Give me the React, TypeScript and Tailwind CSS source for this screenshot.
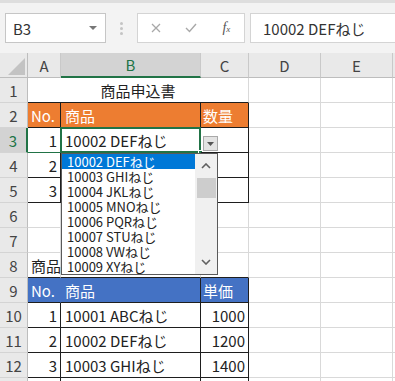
import type { ReactNode } from 'react';
import { twMerge } from 'tailwind-merge';

const GRID = 'border-r border-b border-r-[#d9d9d9] border-b-[#d9d9d9]';
const TBL = 'border-r-[#1e1e1e] border-b-[#1e1e1e]';
const ORANGE = 'bg-[#ed7d31] text-white';
const BLUE = 'bg-[#4472c4] text-white';

type CellSpec = { text?: ReactNode; cls?: string; span?: number; extra?: ReactNode };

function Cell({ spec }: { spec: CellSpec }) {
  return (
    <div
      className={twMerge(
        GRID,
        'relative flex items-center whitespace-nowrap px-[3px] pt-[1px] text-[15px] text-[#222]',
        spec.span === 3 && 'col-span-3',
        spec.cls
      )}
    >
      {spec.text}
      {spec.extra}
    </div>
  );
}

function ColHeader({ label, active }: { label: string; active?: boolean }) {
  return (
    <div
      className={twMerge(
        'flex items-center justify-center border-r border-b border-r-[#c9c9c9] border-b-[#bdbdbd] bg-[#e9e9e9] text-[15px] text-[#444]',
        active && 'border-b-2 border-b-[#217346] bg-[#d3d3d3] text-[#217346]'
      )}
    >
      {label}
    </div>
  );
}

function RowHeader({ n, active }: { n: number; active?: boolean }) {
  return (
    <div
      className={twMerge(
        'flex items-center justify-center border-r border-b border-r-[#bdbdbd] border-b-[#d4d4d4] bg-[#e9e9e9] text-[15px] text-[#444]',
        active && 'border-r-2 border-r-[#217346] bg-[#d3d3d3] text-[#217346]'
      )}
    >
      {n}
    </div>
  );
}

const blank = (): CellSpec => ({});
const num = (t: string, extra = ''): CellSpec => ({ text: t, cls: `justify-end ${TBL} ${extra}` });
const txt = (t: string, extra = ''): CellSpec => ({ text: t, cls: `pl-[4px] ${TBL} ${extra}` });

const activeFrame = (
  <>
    <div className="pointer-events-none absolute -top-px -left-px -right-px -bottom-px border-2 border-[#217346]" />
    <div className="absolute -right-[3px] -bottom-[3px] h-[5px] w-[5px] border border-white bg-[#217346]" />
  </>
);

const listButton = (
  <div className="absolute left-[2px] top-[8px] flex h-[15px] w-[15px] items-center justify-center border border-[#a9a9a9] bg-[#e3e3e3]">
    <svg width="7" height="4" viewBox="0 0 7 4">
      <polygon points="0,0 7,0 3.5,4" fill="#555" />
    </svg>
  </div>
);

const rows: CellSpec[][] = [
  [{ text: '商品申込書', span: 3, cls: 'justify-center border-b-[#1e1e1e]' }, blank(), blank(), blank()],
  [
    { text: 'No.', cls: `${ORANGE} ${TBL}` },
    { text: '商品', cls: `${ORANGE} ${TBL} pl-[4px]` },
    { text: '数量', cls: `${ORANGE} ${TBL} pl-[2px]` },
    blank(), blank(), blank(),
  ],
  [
    num('1', 'border-b-[#217346]'),
    { ...txt('10002 DEFねじ'), extra: activeFrame },
    { cls: TBL, extra: listButton },
    blank(), blank(), blank(),
  ],
  [num('2'), txt(''), { cls: TBL }, blank(), blank(), blank()],
  [num('3'), txt(''), { cls: TBL }, blank(), blank(), blank()],
  [blank(), blank(), blank(), blank(), blank(), blank()],
  [blank(), blank(), blank(), blank(), blank(), blank()],
  [
    { text: '商品一覧', cls: 'border-b-[#1e1e1e]' },
    { cls: 'border-b-[#1e1e1e]' },
    { cls: 'border-b-[#1e1e1e]' },
    blank(), blank(), blank(),
  ],
  [
    { text: 'No.', cls: `${BLUE} ${TBL} border-r-[#4472c4]` },
    { text: '商品', cls: `${BLUE} ${TBL} pl-[4px]` },
    { text: '単価', cls: `${BLUE} ${TBL} pl-[2px]` },
    blank(), blank(), blank(),
  ],
  [num('1'), txt('10001 ABCねじ'), num('1000'), blank(), blank(), blank()],
  [num('2'), txt('10002 DEFねじ'), num('1200'), blank(), blank(), blank()],
  [num('3'), txt('10003 GHIねじ'), num('1400'), blank(), blank(), blank()],
  [num(''), txt(''), num(''), blank(), blank(), blank()],
];

const options = [
  '10002 DEFねじ',
  '10003 GHIねじ',
  '10004 JKLねじ',
  '10005 MNOねじ',
  '10006 PQRねじ',
  '10007 STUねじ',
  '10008 VWねじ',
  '10009 XYねじ',
];

function Chevron({ up }: { up?: boolean }) {
  return (
    <svg width="10" height="6" viewBox="0 0 10 6">
      <polyline
        points={up ? '1,5 5,1 9,5' : '1,1 5,5 9,1'}
        fill="none"
        stroke="#606060"
        strokeWidth="1.6"
      />
    </svg>
  );
}

function FormulaBar() {
  return (
    <div className="box-border flex h-[53px] items-start border-t-[3px] border-t-[#dedede] bg-[#f3f3f3] pt-[10px]">
      <div className="ml-[5px] flex h-[30px] w-[101px] items-center justify-between border border-[#c6c6c6] bg-white pr-[8px] pl-[7px]">
        <span className="text-[15px] text-[#333]">B3</span>
        <svg width="8" height="4" viewBox="0 0 8 4">
          <polygon points="0,0 8,0 4,4" fill="#777" />
        </svg>
      </div>
      <div className="ml-[14px] flex h-[30px] flex-col items-center justify-center gap-[2px]">
        <span className="h-[3px] w-[3px] rounded-full bg-[#c4c4c4]" />
        <span className="h-[3px] w-[3px] rounded-full bg-[#c4c4c4]" />
        <span className="h-[3px] w-[3px] rounded-full bg-[#c4c4c4]" />
      </div>
      <div className="ml-[14px] flex h-[30px] w-[108px] items-center border border-[#d4d4d4] bg-white">
        <span className="flex w-[36px] justify-center">
          <svg width="10" height="10" viewBox="0 0 10 10">
            <path d="M1 1 L9 9 M9 1 L1 9" stroke="#a8a8a8" strokeWidth="1.3" />
          </svg>
        </span>
        <span className="flex w-[36px] justify-center">
          <svg width="12" height="10" viewBox="0 0 12 10">
            <polyline points="1,5 4.5,8.5 11,1" fill="none" stroke="#a8a8a8" strokeWidth="1.4" />
          </svg>
        </span>
        <span className="flex w-[36px] justify-center font-['Liberation_Serif',serif] text-[14px] italic text-[#555]">
          f<span className="mt-[4px] text-[9px]">x</span>
        </span>
      </div>
      <div className="ml-[5px] flex h-[30px] flex-1 items-center border border-r-0 border-[#d4d4d4] bg-white pl-[12px] text-[15px] text-[#333]">
        10002 DEFねじ
      </div>
    </div>
  );
}

export default function App() {
  return (
    <div className="relative h-[381px] w-[395px] overflow-hidden bg-white font-['Noto_Sans_CJK_JP','Noto_Sans',sans-serif] leading-none">
      <FormulaBar />

      <div className="grid grid-cols-[28px_33px_140px_48px_72px_72px_1fr] auto-rows-[25px]">
        {/* corner */}
        <div className="relative border-r border-b border-r-[#bdbdbd] border-b-[#bdbdbd] bg-[#e9e9e9]">
          <svg className="absolute left-[8px] top-[5px]" width="17" height="17" viewBox="0 0 17 17">
            <polygon points="0,17 17,17 17,0" fill="#c3c3c3" />
          </svg>
        </div>
        <ColHeader label="A" />
        <ColHeader label="B" active />
        <ColHeader label="C" />
        <ColHeader label="D" />
        <ColHeader label="E" />
        <ColHeader label="" />

        {rows.map((cells, i) => (
          <div key={i} className="contents">
            <RowHeader n={i + 1} active={i === 2} />
            {cells.map((c, j) => (
              <Cell key={j} spec={c} />
            ))}
          </div>
        ))}
      </div>

      {/* data validation list */}
      <div className="absolute left-[61px] top-[153px] flex h-[122px] w-[157px] border border-[#5a5a5a] bg-white">
        <div className="flex-1">
          {options.map((o, i) => (
            <div
              key={o}
              className={twMerge(
                'h-[15px] whitespace-nowrap pl-[5px] text-[13px] leading-[15px] text-[#222]',
                i === 0 && 'bg-[#0078d7] text-white'
              )}
            >
              {o}
            </div>
          ))}
        </div>
        <div className="flex w-[22px] flex-col items-center bg-[#f0f0f0]">
          <div className="flex h-[24px] items-center justify-center">
            <Chevron up />
          </div>
          <div className="h-[20px] w-[19px] bg-[#cdcdcd]" />
          <div className="flex-1" />
          <div className="flex h-[24px] items-center justify-center">
            <Chevron />
          </div>
        </div>
      </div>
    </div>
  );
}
